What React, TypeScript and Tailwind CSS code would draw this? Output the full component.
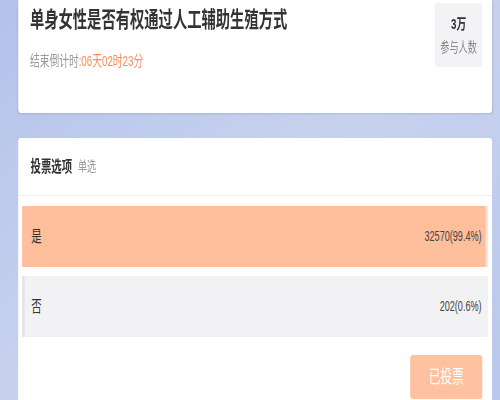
const options = [
  { label: '是', count: 32570, pct: 99.4, fill: 'bg-[#ffbf9c]', track: 'bg-[#ffe3d3]' },
  { label: '否', count: 202, pct: 0.6, fill: 'bg-[#e3e3e8]', track: 'bg-[#f2f2f5]' },
]

export default function App() {
  return (
    <div
      className="w-[500px] h-[400px] overflow-hidden bg-gradient-to-br from-[#b2c2ea] via-[#c8d2ee] to-[#b8c7ec]"
      style={{ fontFamily: '"Liberation Sans", "Noto Sans CJK SC", sans-serif' }}
    >
      {/* the screenshot is squeezed horizontally, so build wide and scale */}
      <div className="w-[770px] origin-top-left scale-x-[0.65] pl-[28px] pr-[13px]">
        {/* header card */}
        <div className="h-[113px] bg-white rounded-b-sm shadow-sm flex justify-between pl-[18px] pr-[15px]">
          <div className="pt-[6px]">
            <h1 className="text-[22px] leading-[28px] font-bold text-[#333]">单身女性是否有权通过人工辅助生殖方式</h1>
            <p className="mt-[18px] text-[15px] leading-[18px] text-[#999]">
              结束倒计时:<span className="text-[#ff8a5c]">06天02时23分</span>
            </p>
          </div>
          <div className="mt-[3px] w-[73px] h-[64px] bg-[#f3f3f5] rounded flex flex-col items-center justify-center">
            <span className="text-[15px] leading-[20px] font-bold text-[#333]">3万</span>
            <span className="mt-[4px] text-[14px] leading-[18px] text-[#888]">参与人数</span>
          </div>
        </div>

        {/* vote card */}
        <div className="mt-[25px] h-[300px] bg-white rounded-t-sm">
          <div className="h-[58px] flex items-center gap-[9px] pl-[19px] border-b border-[#eeeeee]">
            <span className="text-[16px] font-bold text-[#333]">投票选项</span>
            <span className="text-[14px] text-[#999]">单选</span>
          </div>
          <div className="px-[6px] pt-[10px] flex flex-col gap-[9px]">
            {options.map(o => (
              <div key={o.label} className={`relative h-[61px] ${o.track}`}>
                <div className={`absolute inset-y-0 left-0 ${o.fill}`} style={{ width: `${o.pct}%` }} />
                <div className="relative h-full flex items-center justify-between pl-[14px] pr-[10px]">
                  <span className="text-[16px] text-[#333]">{o.label}</span>
                  <span className="text-[14px] text-[#444]">{o.count}({o.pct}%)</span>
                </div>
              </div>
            ))}
          </div>
          <div className="flex justify-end pr-[15px] pt-[18px]">
            <button className="w-[111px] h-[44px] bg-[#ffc1a0] rounded text-white text-[18px]">已投票</button>
          </div>
        </div>
      </div>
    </div>
  )
}
